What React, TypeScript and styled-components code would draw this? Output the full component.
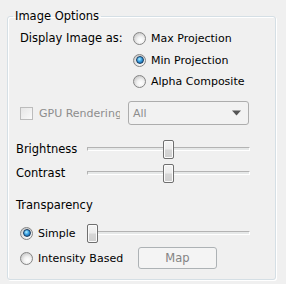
import React from "react";
import styled, { createGlobalStyle } from "styled-components";

const GlobalStyle = createGlobalStyle`
  html, body {
    margin: 0;
    padding: 0;
    background: #f0f0f0;
  }
  body {
    font-family: "DejaVu Sans", "Liberation Sans", sans-serif;
    font-size: 11px;
    color: #000;
  }
`;

const Page = styled.div({
  width: "286px",
  height: "284px",
  padding: "8px 0 0 7px",
  boxSizing: "border-box",
});

const Group = styled.fieldset({
  margin: 0,
  padding: "0 0 0 8px",
  width: "269px",
  height: "272px",
  boxSizing: "border-box",
  border: "1px solid #d5dfe5",
  borderRadius: "3px",
  boxShadow: "1px 1px 0 #fff, inset 1px 1px 0 #fff",
  display: "flex",
  flexDirection: "column",
});

const Legend = styled.legend({
  marginLeft: "-3px",
  padding: "0 2px",
  lineHeight: "16px",
  fontSize: "11.5px",
});

const Content = styled.div({
  paddingTop: "4px",
  display: "flex",
  flexDirection: "column",
});

const DisplayRow = styled.div({
  display: "flex",
  paddingLeft: "4px",
});

const DisplayLabel = styled.div({
  width: "113px",
  height: "21.5px",
  lineHeight: "21.5px",
  fontSize: "11.5px",
});

const RadioList = styled.div({
  display: "flex",
  flexDirection: "column",
});

const RadioItem = styled.label<{ $h?: number; $w?: number }>`
  display: flex;
  align-items: center;
  gap: 5px;
  height: ${(p) => p.$h ?? 21.5}px;
  width: ${(p) => (p.$w ? p.$w + "px" : "auto")};
  white-space: nowrap;
  font-size: 11px;
`;

const RadioCircle = styled.span<{ $checked?: boolean }>`
  position: relative;
  width: 13px;
  height: 13px;
  box-sizing: border-box;
  border-radius: 50%;
  border: 1px solid #858585;
  background: radial-gradient(circle at 60% 65%, #ffffff 0%, #f2f2f2 35%, #cdcdcd 75%, #b4b4b4 100%);
  flex-shrink: 0;
  &::after {
    content: "";
    display: ${(p) => (p.$checked ? "block" : "none")};
    position: absolute;
    left: 1.5px;
    top: 1.5px;
    width: 8px;
    height: 8px;
    box-sizing: border-box;
    border-radius: 50%;
    border: 1px solid #163a5f;
    background: radial-gradient(circle at 40% 35%, #b0f0ff 0%, #3aa0e4 45%, #0b4f8a 100%);
  }
`;

const GpuRow = styled.div({
  display: "flex",
  alignItems: "center",
  marginTop: "8.5px",
  height: "24px",
  paddingLeft: "4px",
});

const Check = styled.span({
  width: "13px",
  height: "13px",
  boxSizing: "border-box",
  border: "1px solid #bcbcbc",
  background: "linear-gradient(135deg, #e6e6e6, #fafafa)",
  flexShrink: 0,
});

const DisabledText = styled.span({
  marginLeft: "6px",
  width: "81px",
  overflow: "hidden",
  whiteSpace: "nowrap",
  color: "#8d8d8d",
});

const Combo = styled.div({
  marginLeft: "8px",
  width: "121px",
  height: "24px",
  boxSizing: "border-box",
  border: "1px solid #adadad",
  borderRadius: "3px",
  background: "#f2f2f2",
  display: "flex",
  alignItems: "center",
  justifyContent: "space-between",
  padding: "0 7px 0 4px",
  color: "#8d8d8d",
});

const Arrow = styled.svg({
  width: "9px",
  height: "6px",
});

const SliderRow = styled.div<{ $mt: number }>`
  display: flex;
  align-items: center;
  height: 20px;
  margin-top: ${(p) => p.$mt}px;
`;

const SliderLabel = styled.div({
  width: "71px",
  fontSize: "11.5px",
});

const Track = styled.div({
  position: "relative",
  width: "163px",
  height: "20px",
  "&::before": {
    content: '""',
    position: "absolute",
    left: 0,
    right: 0,
    top: "8px",
    height: "4px",
    boxSizing: "border-box",
    borderTop: "1px solid #b3b3b3",
    borderLeft: "1px solid #b3b3b3",
    borderBottom: "1px solid #ffffff",
    borderRight: "1px solid #ffffff",
    background: "#e6e8e8",
  },
});

const Thumb = styled.span({
  position: "absolute",
  top: "1px",
  width: "11px",
  height: "19px",
  boxSizing: "border-box",
  border: "1px solid #6f6f6f",
  borderRadius: "2px",
  background: "linear-gradient(#f4f4f4 0%, #ececec 45%, #d6d6d6 55%, #cfcfcf 100%)",
  boxShadow: "inset 0 0 0 1px #fbfbfb",
});

const SectionTitle = styled.div({
  marginTop: "14px",
  height: "16px",
  lineHeight: "16px",
  fontSize: "11.5px",
});

const RadioSliderRow = styled.div({
  display: "flex",
  alignItems: "center",
  height: "20px",
  marginTop: "10px",
});

const RadioCell = styled.div({
  width: "71px",
  paddingLeft: "4px",
  boxSizing: "border-box",
});

const IntensityRow = styled.div({
  display: "flex",
  alignItems: "center",
  height: "22px",
  marginTop: "4px",
  paddingLeft: "4px",
});

const MapButton = styled.button({
  width: "79px",
  height: "22px",
  boxSizing: "border-box",
  border: "1px solid #adb2b5",
  borderRadius: "3px",
  background: "#f4f4f4",
  color: "#838383",
  fontFamily: "inherit",
  fontSize: "11.5px",
  padding: 0,
});

const sliders = [
  { label: "Brightness", value: 0.5, mt: 14 },
  { label: "Contrast", value: 0.5, mt: 4 },
];

const trackRange = 163 - 11;

export default function App() {
  return (
    <>
      <GlobalStyle />
      <Page>
        <Group>
          <Legend>Image Options</Legend>
          <Content>
            <DisplayRow>
              <DisplayLabel>Display Image as:</DisplayLabel>
              <RadioList>
                <RadioItem>
                  <RadioCircle />
                  Max Projection
                </RadioItem>
                <RadioItem>
                  <RadioCircle $checked />
                  Min Projection
                </RadioItem>
                <RadioItem>
                  <RadioCircle />
                  Alpha Composite
                </RadioItem>
              </RadioList>
            </DisplayRow>

            <GpuRow>
              <Check />
              <DisabledText>GPU Rendering</DisabledText>
              <Combo>
                All
                <Arrow viewBox="0 0 9 6">
                  <path d="M0 0.5 H9 L4.5 5.5 Z" fill="#555" />
                </Arrow>
              </Combo>
            </GpuRow>

            {sliders.map((s) => (
              <SliderRow key={s.label} $mt={s.mt}>
                <SliderLabel>{s.label}</SliderLabel>
                <Track>
                  <Thumb style={{ left: Math.round(s.value * trackRange) + "px" }} />
                </Track>
              </SliderRow>
            ))}

            <SectionTitle>Transparency</SectionTitle>

            <RadioSliderRow>
              <RadioCell>
                <RadioItem $h={20}>
                  <RadioCircle $checked />
                  Simple
                </RadioItem>
              </RadioCell>
              <Track>
                <Thumb style={{ left: "0px" }} />
              </Track>
            </RadioSliderRow>

            <IntensityRow>
              <RadioItem $h={22} $w={118}>
                <RadioCircle />
                Intensity Based
              </RadioItem>
              <MapButton disabled>Map</MapButton>
            </IntensityRow>
          </Content>
        </Group>
      </Page>
    </>
  );
}
